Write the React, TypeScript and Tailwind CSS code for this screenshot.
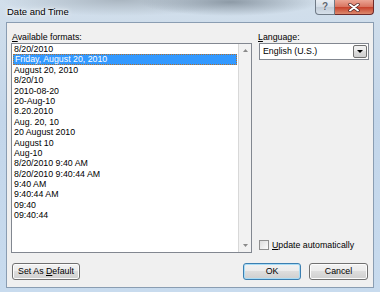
import React from 'react';

const formats = [
  '8/20/2010',
  'Friday, August 20, 2010',
  'August 20, 2010',
  '8/20/10',
  '2010-08-20',
  '20-Aug-10',
  '8.20.2010',
  'Aug. 20, 10',
  '20 August 2010',
  'August 10',
  'Aug-10',
  '8/20/2010 9:40 AM',
  '8/20/2010 9:40:44 AM',
  '9:40 AM',
  '9:40:44 AM',
  '09:40',
  '09:40:44',
];

function Btn({ children, w, focused }: { children: React.ReactNode; w: string; focused?: boolean }) {
  return (
    <button
      className={`${w} h-[17px] rounded-[3px] border ${
        focused ? 'border-[#3c7fb1] shadow-[inset_0_0_0_1px_#a8dcf6]' : 'border-[#707070] shadow-[inset_0_0_0_1px_#fcfcfc]'
      } bg-[linear-gradient(#f2f2f2_0%,#ebebeb_49%,#dddddd_50%,#cfcfcf_100%)] text-[8.8px] leading-none text-black flex items-center justify-center`}
    >
      <span>{children}</span>
    </button>
  );
}

export default function App() {
  return (
    <div className="w-[380px] h-[292px] overflow-hidden flex flex-col font-['Liberation_Sans',Arial,sans-serif] bg-[radial-gradient(ellipse_90px_14px_at_230px_2px,#8d9aa6_0%,rgba(141,154,166,0)_100%),radial-gradient(ellipse_120px_16px_at_120px_0px,#aab6c1_0%,rgba(170,182,193,0)_100%),linear-gradient(#d2dfeb,#c3d6ea_40%,#c8dbee)]">
      {/* TITLE BAR */}
      <div className="h-[22px] flex items-start shrink-0">
        <div className="pl-[7px] pt-[6px] text-[9.5px] leading-[11px] text-black [text-shadow:0_0_6px_#ffffff,0_0_3px_#ffffff]">
          Date and Time
        </div>
        <div className="ml-auto mr-[6px] flex">
          <div className="w-[20px] h-[15px] rounded-bl-[4px] border border-t-0 border-[#6f7a86] bg-[linear-gradient(#e9eef3,#d3dce6_50%,#c2ccd7_51%,#d6e0ea)] flex items-center justify-center text-[10px] font-bold leading-none text-[#5d6670] [text-shadow:0_0_1px_#fff]">
            ?
          </div>
          <div className="w-[39px] h-[15px] rounded-br-[4px] border border-t-0 border-l-0 border-[#6f2a2a] bg-[linear-gradient(#eba594,#d8735f_50%,#c7402a_51%,#dc8a6e)] flex items-center justify-center">
            <svg width="12" height="9" viewBox="0 0 12 9">
              <path d="M2 1.5 L10 7.5 M10 1.5 L2 7.5" stroke="#4a2222" strokeWidth="3.4" strokeLinecap="round" />
              <path d="M2 1.5 L10 7.5 M10 1.5 L2 7.5" stroke="#ffffff" strokeWidth="2" strokeLinecap="round" />
            </svg>
          </div>
        </div>
      </div>

      {/* CLIENT AREA */}
      <div className="mx-[6px] mb-[4px] flex-1 bg-[#f0f0f0] border border-[#8a9db2] flex flex-col text-[8.8px] text-black">
        <div className="flex pl-[4px] pr-[4px] pt-[8px]">
          {/* LEFT COLUMN */}
          <div className="w-[241px] flex flex-col">
            <div className="h-[12px] leading-[12px] pl-[1px]">
              <span className="underline underline-offset-1">A</span>vailable formats:
            </div>
            <div className="h-[210px] border border-[#828790] bg-white flex">
              <div className="flex-1 flex flex-col">
                {formats.map((f, i) => (
                  <div
                    key={f}
                    className={`h-[10.4px] leading-[10.4px] pl-[2px] whitespace-nowrap ${
                      i === 1
                        ? 'mx-[1px] pl-[1px] bg-[#3399ff] text-white outline outline-1 outline-dotted outline-offset-[-1px] outline-[#b07030]'
                        : ''
                    }`}
                  >
                    {f}
                  </div>
                ))}
              </div>
              <div className="w-[13px] border-l border-[#d8d8d8] bg-[#f2f2f2] flex flex-col items-center justify-between py-[5px]">
                <svg width="5" height="3" viewBox="0 0 5 3">
                  <path d="M0 3 L2.5 0 L5 3 Z" fill="#8a8a8a" />
                </svg>
                <svg width="5" height="3" viewBox="0 0 5 3">
                  <path d="M0 0 L5 0 L2.5 3 Z" fill="#8a8a8a" />
                </svg>
              </div>
            </div>
          </div>

          {/* RIGHT COLUMN */}
          <div className="ml-[7px] w-[110px] flex flex-col">
            <div className="h-[12px] leading-[12px] -ml-[1px]">
              <span className="underline underline-offset-1">L</span>anguage:
            </div>
            <div className="h-[17px] border border-[#828790] bg-white flex items-center">
              <span className="pl-[3px] flex-1">English (U.S.)</span>
              <div className="w-[14px] h-[13px] mr-[1px] rounded-[2px] border border-[#707070] bg-[linear-gradient(#f2f2f2,#ebebeb_49%,#dddddd_50%,#cfcfcf)] flex items-center justify-center">
                <svg width="6" height="3" viewBox="0 0 6 3">
                  <path d="M0 0 L6 0 L3 3 Z" fill="#000" />
                </svg>
              </div>
            </div>
            <div className="mt-auto mb-[1px] flex items-center gap-[3px]">
              <div className="w-[10px] h-[10px] border border-[#8f8f8f] bg-[linear-gradient(135deg,#dcdcdc,#fbfbfb)]" />
              <span>
                <span className="underline underline-offset-1">U</span>pdate automatically
              </span>
            </div>
          </div>
        </div>

        {/* BUTTON ROW */}
        <div className="mt-auto mb-[7px] flex pl-[5px] pr-[5px]">
          <Btn w="w-[68px]">
            Set As <span className="underline underline-offset-1">D</span>efault
          </Btn>
          <div className="ml-auto flex gap-[8px]">
            <Btn w="w-[58px]" focused>
              OK
            </Btn>
            <Btn w="w-[59px]">Cancel</Btn>
          </div>
        </div>
      </div>
    </div>
  );
}
